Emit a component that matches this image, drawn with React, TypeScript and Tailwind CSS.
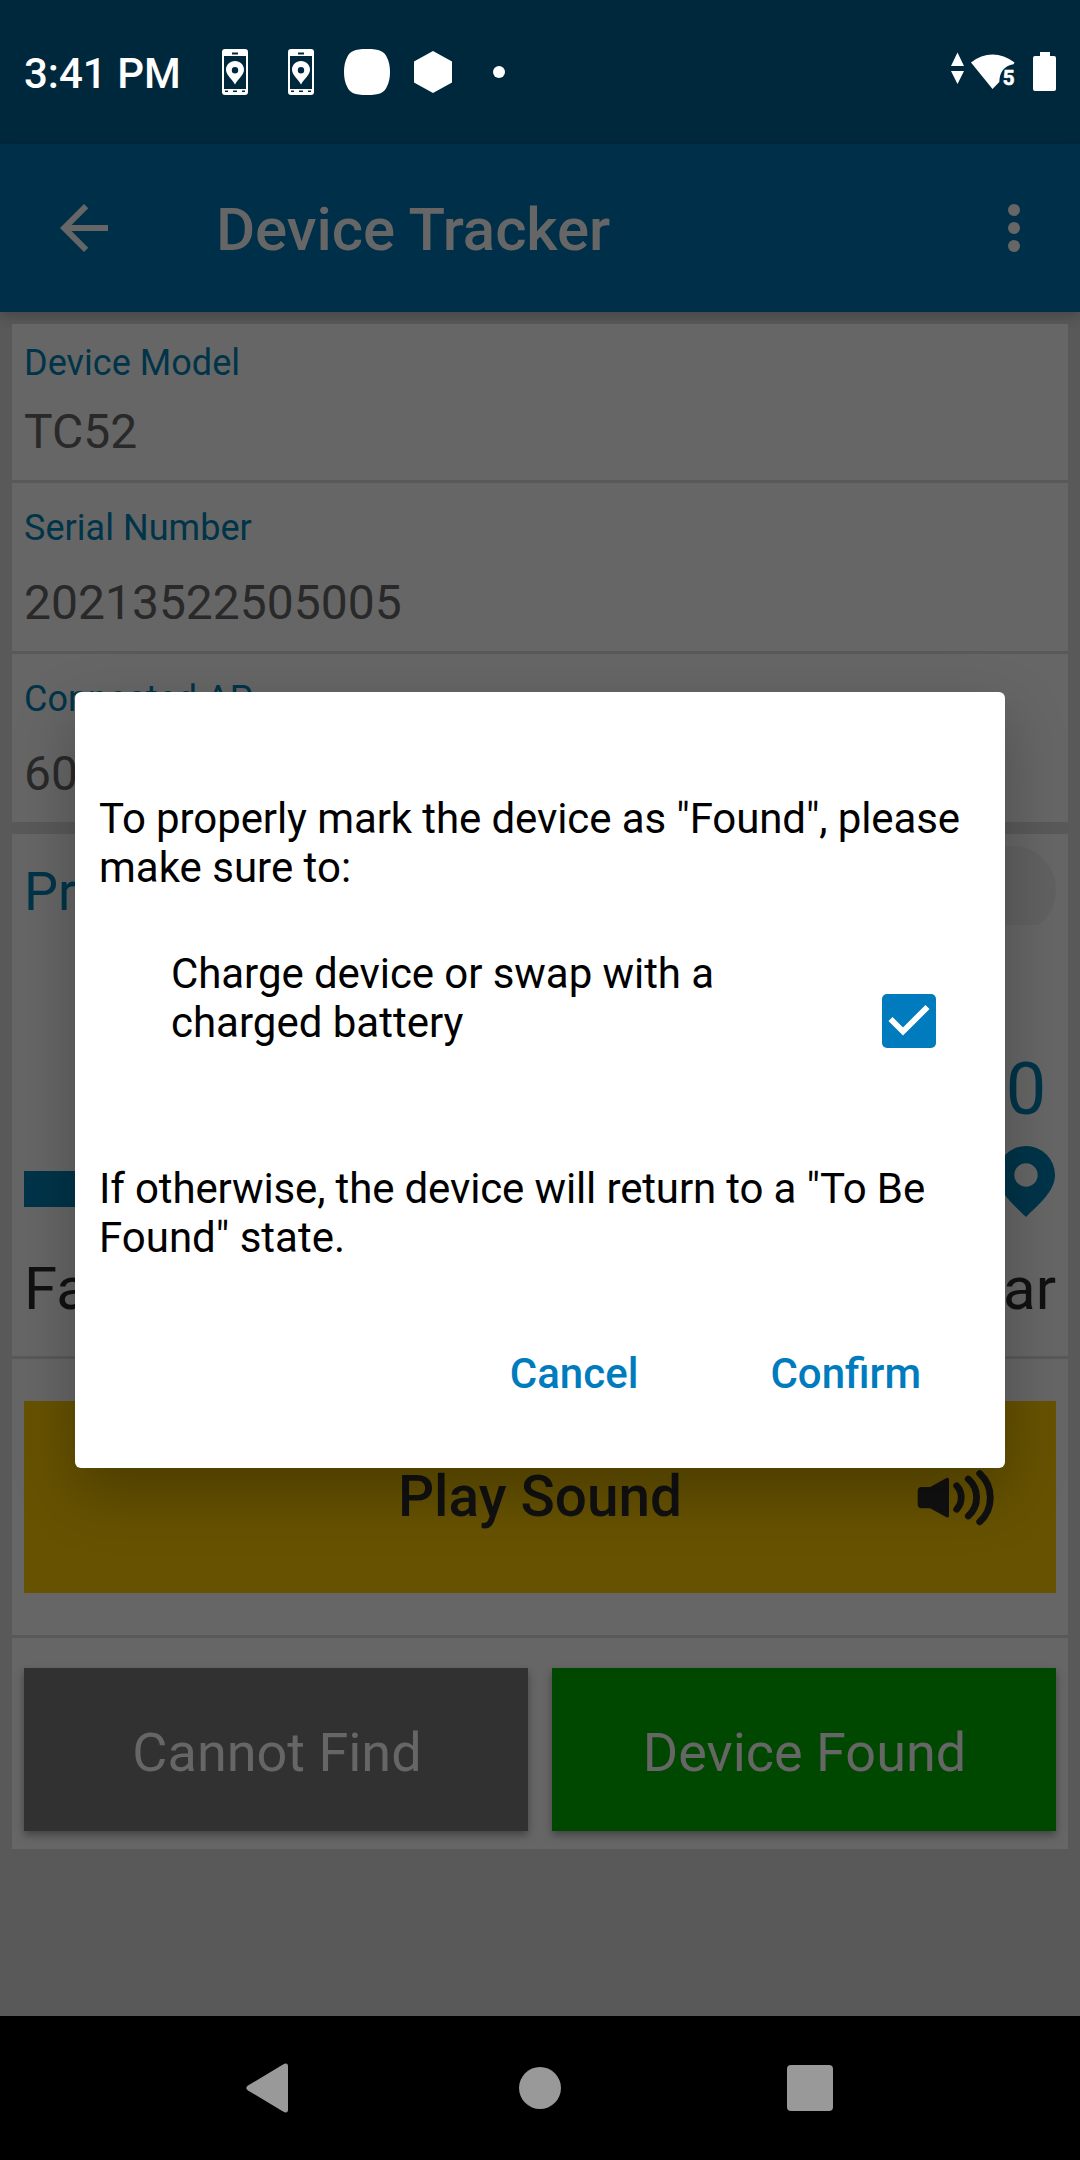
import React from "react";

function PhonePin() {
  return (
    <svg width="26" height="46" viewBox="0 0 26 46" className="shrink-0">
      <path
        fill="#fff"
        fillRule="evenodd"
        d="M3 0H23Q26 0 26 3V43Q26 46 23 46H3Q0 46 0 43V3Q0 0 3 0ZM10 3.5V5.5H16V3.5ZM2 7V40H24V7ZM3 41.5V43H6V41.5ZM11 41.5V43H15V41.5ZM20 41.5V43H23V41.5Z"
      />
      <path
        fill="#fff"
        fillRule="evenodd"
        d="M13 12C8 12 4 15.8 4 20.6C4 26 9.5 29.5 13 35.5C16.5 29.5 22 26 22 20.6C22 15.8 18 12 13 12ZM13 18A3.2 3.2 0 1 1 13 24.4A3.2 3.2 0 1 1 13 18Z"
      />
    </svg>
  );
}

function StatusBar() {
  return (
    <div className="flex h-[144px] shrink-0 items-center justify-between bg-[#00283c] pr-6 pl-6">
      <div className="flex items-center">
        <span className="w-[198px] pt-[3px] text-[42px] leading-[49px] font-medium whitespace-nowrap text-white">
          3:41 PM
        </span>
        <PhonePin />
        <div className="w-10" />
        <PhonePin />
        <svg width="46" height="48" viewBox="0 0 46 48" className="ml-[30px]">
          <path
            fill="#fff"
            d="M23 1C36 1 40 3.500 42.500 8.500C45 13 46 18 46 24C46 30 45 35 42.500 39.500C40 44.500 36 47 23 47C10 47 6 44.500 3.500 39.500C1 35 0 30 0 24C0 18 1 13 3.500 8.500C6 3.500 10 1 23 1Z"
          />
        </svg>
        <svg width="38" height="44" viewBox="0 0 38 44" className="ml-6">
          <path fill="#fff" d="M19 1L38 11.500V32.500L19 43L0 32.500V11.500Z" />
        </svg>
        <div className="ml-[41px] size-3 rounded-full bg-white" />
      </div>
      <div className="flex items-center">
        <svg width="106" height="42" viewBox="0 0 106 42">
          <path fill="#fff" d="M7.500 1.500L14 15H1ZM1 20H14L7.500 33Z" />
          <path
            fill="#fff"
            d="M21 11.500Q31 3.500 42.500 3.500Q54 3.500 64.500 11.500L63.500 13.300Q49.500 16 49.300 31L42.500 38L21 11.500Z"
          />
          <text
            x="52.8"
            y="34"
            fill="#fff"
            stroke="#fff"
            strokeWidth="0.6"
            fontSize="20.5"
            fontWeight="700"
            fontFamily="Roboto, sans-serif"
          >
            5
          </text>
          <path fill="#fff" d="M90 1H100V5H104Q106 5 106 7V38Q106 40 104 40H85Q83 40 83 38V7Q83 5 85 5H90Z" />
        </svg>
      </div>
    </div>
  );
}

function AppBar() {
  return (
    <div className="relative flex h-[168px] shrink-0 items-center bg-[#003049] pr-[60px] pl-[60px] shadow-[0_4px_12px_rgba(0,0,0,0.22)]">
      <svg width="48" height="48" viewBox="4 4 16 16">
        <path fill="#666" d="M20 11H7.830l5.590-5.590L12 4l-8 8 8 8 1.410-1.410L7.830 13H20v-2z" />
      </svg>
      <h1 className="flex-1 pt-[4px] pl-[108px] text-[60px] leading-[70px] font-medium tracking-[-0.08px] text-[#666]">
        Device Tracker
      </h1>
      <div className="flex flex-col gap-[6px]">
        <div className="size-3 rounded-full bg-[#666]" />
        <div className="size-3 rounded-full bg-[#666]" />
        <div className="size-3 rounded-full bg-[#666]" />
      </div>
    </div>
  );
}

function Row({ label, value }: { label: string; value: string }) {
  return (
    <div className="flex h-[168px] flex-col gap-[26px] bg-[#666] px-3 pt-6 first:h-[156px] first:gap-5 first:pt-[18px]">
      <div className="text-[36px] leading-[42px] tracking-[0.04px] text-[#003449]">{label}</div>
      <div className="text-[48px] leading-[56px] text-[#292929]">{value}</div>
    </div>
  );
}

function Proximity() {
  return (
    <div className="flex h-[522px] flex-col bg-[#666] px-3 pt-3">
      <div className="flex h-[79px] items-start justify-between overflow-hidden">
        <div className="pt-[14px] text-[54px] leading-[64px] text-[#003449]">Proximity</div>
        <div className="size-[88px] rounded-full bg-[#616161]" />
      </div>
      <div className="mt-[123px] flex h-[84px] justify-end">
        <div className="w-[60px] text-center text-[72px] leading-[84px] text-[#003449]">0</div>
      </div>
      <div className="mt-[14px] flex h-[71px] items-center">
        <div className="mt-[15px] h-9 flex-1 bg-[#003449]" />
        <svg width="60" height="71" viewBox="0 0 60 71">
          <path
            fill="#003449"
            fillRule="evenodd"
            d="M30 0A29 29 0 0 0 1 29C1 45 17 58 30 71C43 58 59 45 59 29A29 29 0 0 0 30 0ZM30 17.300A11.700 11.700 0 1 1 30 40.700A11.700 11.700 0 1 1 30 17.300Z"
          />
        </svg>
      </div>
      <div className="mt-[37px] flex justify-between text-[60px] leading-[70px] text-[#111]">
        <span>Far</span>
        <span>Near</span>
      </div>
    </div>
  );
}

function SoundButton() {
  return (
    <div className="h-[276px] bg-[#666] px-3 pt-[42px]">
      <button className="relative flex h-[192px] w-full items-center justify-center bg-[#665200]">
        <span className="text-[56.7px] leading-[64px] font-medium text-[#111]">Play Sound</span>
        <svg width="78" height="56" viewBox="0 0 78 56" className="absolute top-[69px] left-[893px]">
          <path
            fill="#111"
            d="M4.700 17H13.200L29.500 8Q32 7 32 9.500V45.800Q32 48.300 29.500 47.300L13.200 38.300H4.700Q0.700 38.300 0.700 34.300V21Q0.700 17 4.700 17Z"
          />
          <g fill="none" stroke="#111" strokeWidth="6.800" strokeLinecap="round">
            <path d="M39.700 15.800A17.400 17.400 0 0 1 39.700 39.200" />
            <path d="M51.300 9A24.800 24.800 0 0 1 51.300 46" />
            <path d="M62.700 3.500A32.800 32.800 0 0 1 62.700 51.800" />
          </g>
        </svg>
      </button>
    </div>
  );
}

function Actions() {
  return (
    <div className="grid h-[211px] grid-cols-2 gap-6 bg-[#666] px-3 pt-[30px]">
      <button className="h-[163px] bg-[#313131] pt-[6px] pl-[2px] text-[54px] leading-[64px] text-[#666] shadow-[0_4px_8px_rgba(0,0,0,0.35)]">
        Cannot Find
      </button>
      <button className="h-[163px] bg-[#004700] pt-[6px] pl-[1px] text-[54px] leading-[64px] text-[#666] shadow-[0_4px_8px_rgba(0,0,0,0.35)]">
        Device Found
      </button>
    </div>
  );
}

function NavBar() {
  return (
    <div className="flex h-[144px] shrink-0 items-center bg-black px-[246px]">
      <svg width="42" height="50" viewBox="0 0 42 50">
        <path fill="#999" d="M37 1.500Q42 -1 42 3.500V46.500Q42 51 37 48.500L2 27.500Q-1.500 25 2 22.500Z" />
      </svg>
      <div className="ml-[231px] size-[42px] rounded-full bg-[#999]" />
      <div className="ml-[226px] size-[46px] rounded-[4px] bg-[#999]" />
    </div>
  );
}

function FoundDialog() {
  return (
    <div className="absolute top-[692px] left-[75px] h-[776px] w-[930px] rounded-[6px] bg-white px-6 pt-[102px] text-[42px] leading-[49px] text-black shadow-[0_24px_60px_rgba(0,0,0,0.26)]">
      <p className="whitespace-nowrap">
        <span className="tracking-[-0.1px]">To properly mark the device as "Found", please</span>
        <br />
        make sure to:
      </p>
      <div className="mt-[57px] flex h-[98px] justify-between pr-[45px] pl-[72px]">
        <p className="whitespace-nowrap">
          <span className="tracking-[-0.07px]">Charge device or swap with a</span>
          <br />
          charged battery
        </p>
        <svg width="54" height="54" viewBox="0 0 54 54" className="mt-[45px]">
          <rect width="54" height="54" rx="5" fill="#007cbe" />
          <path d="M8.500 25L21 37.500L45.500 13" fill="none" stroke="#fff" strokeWidth="5.800" />
        </svg>
      </div>
      <p className="mt-[117px] whitespace-nowrap">
        <span className="tracking-[-0.14px]">If otherwise, the device will return to a "To Be</span>
        <br />
        Found" state.
      </p>
      <div className="mt-[87px] flex justify-end gap-[132px] pr-[60px] font-medium text-[#007cbe]">
        <button>Cancel</button>
        <button>Confirm</button>
      </div>
    </div>
  );
}

export default function App() {
  return (
    <div className="relative flex h-[2160px] w-[1080px] flex-col overflow-hidden bg-[#595959] font-[Roboto,sans-serif]">
      <StatusBar />
      <AppBar />
      <main className="relative flex flex-1 flex-col gap-3 px-3 pt-3">
        <div className="flex flex-col gap-[3px]">
          <Row label="Device Model" value="TC52" />
          <Row label="Serial Number" value="20213522505005" />
          <Row label="Connected AP" value="60" />
        </div>
        <div className="flex flex-col gap-[3px]">
          <Proximity />
          <SoundButton />
          <Actions />
        </div>
      </main>
      <NavBar />
      <FoundDialog />
    </div>
  );
}
